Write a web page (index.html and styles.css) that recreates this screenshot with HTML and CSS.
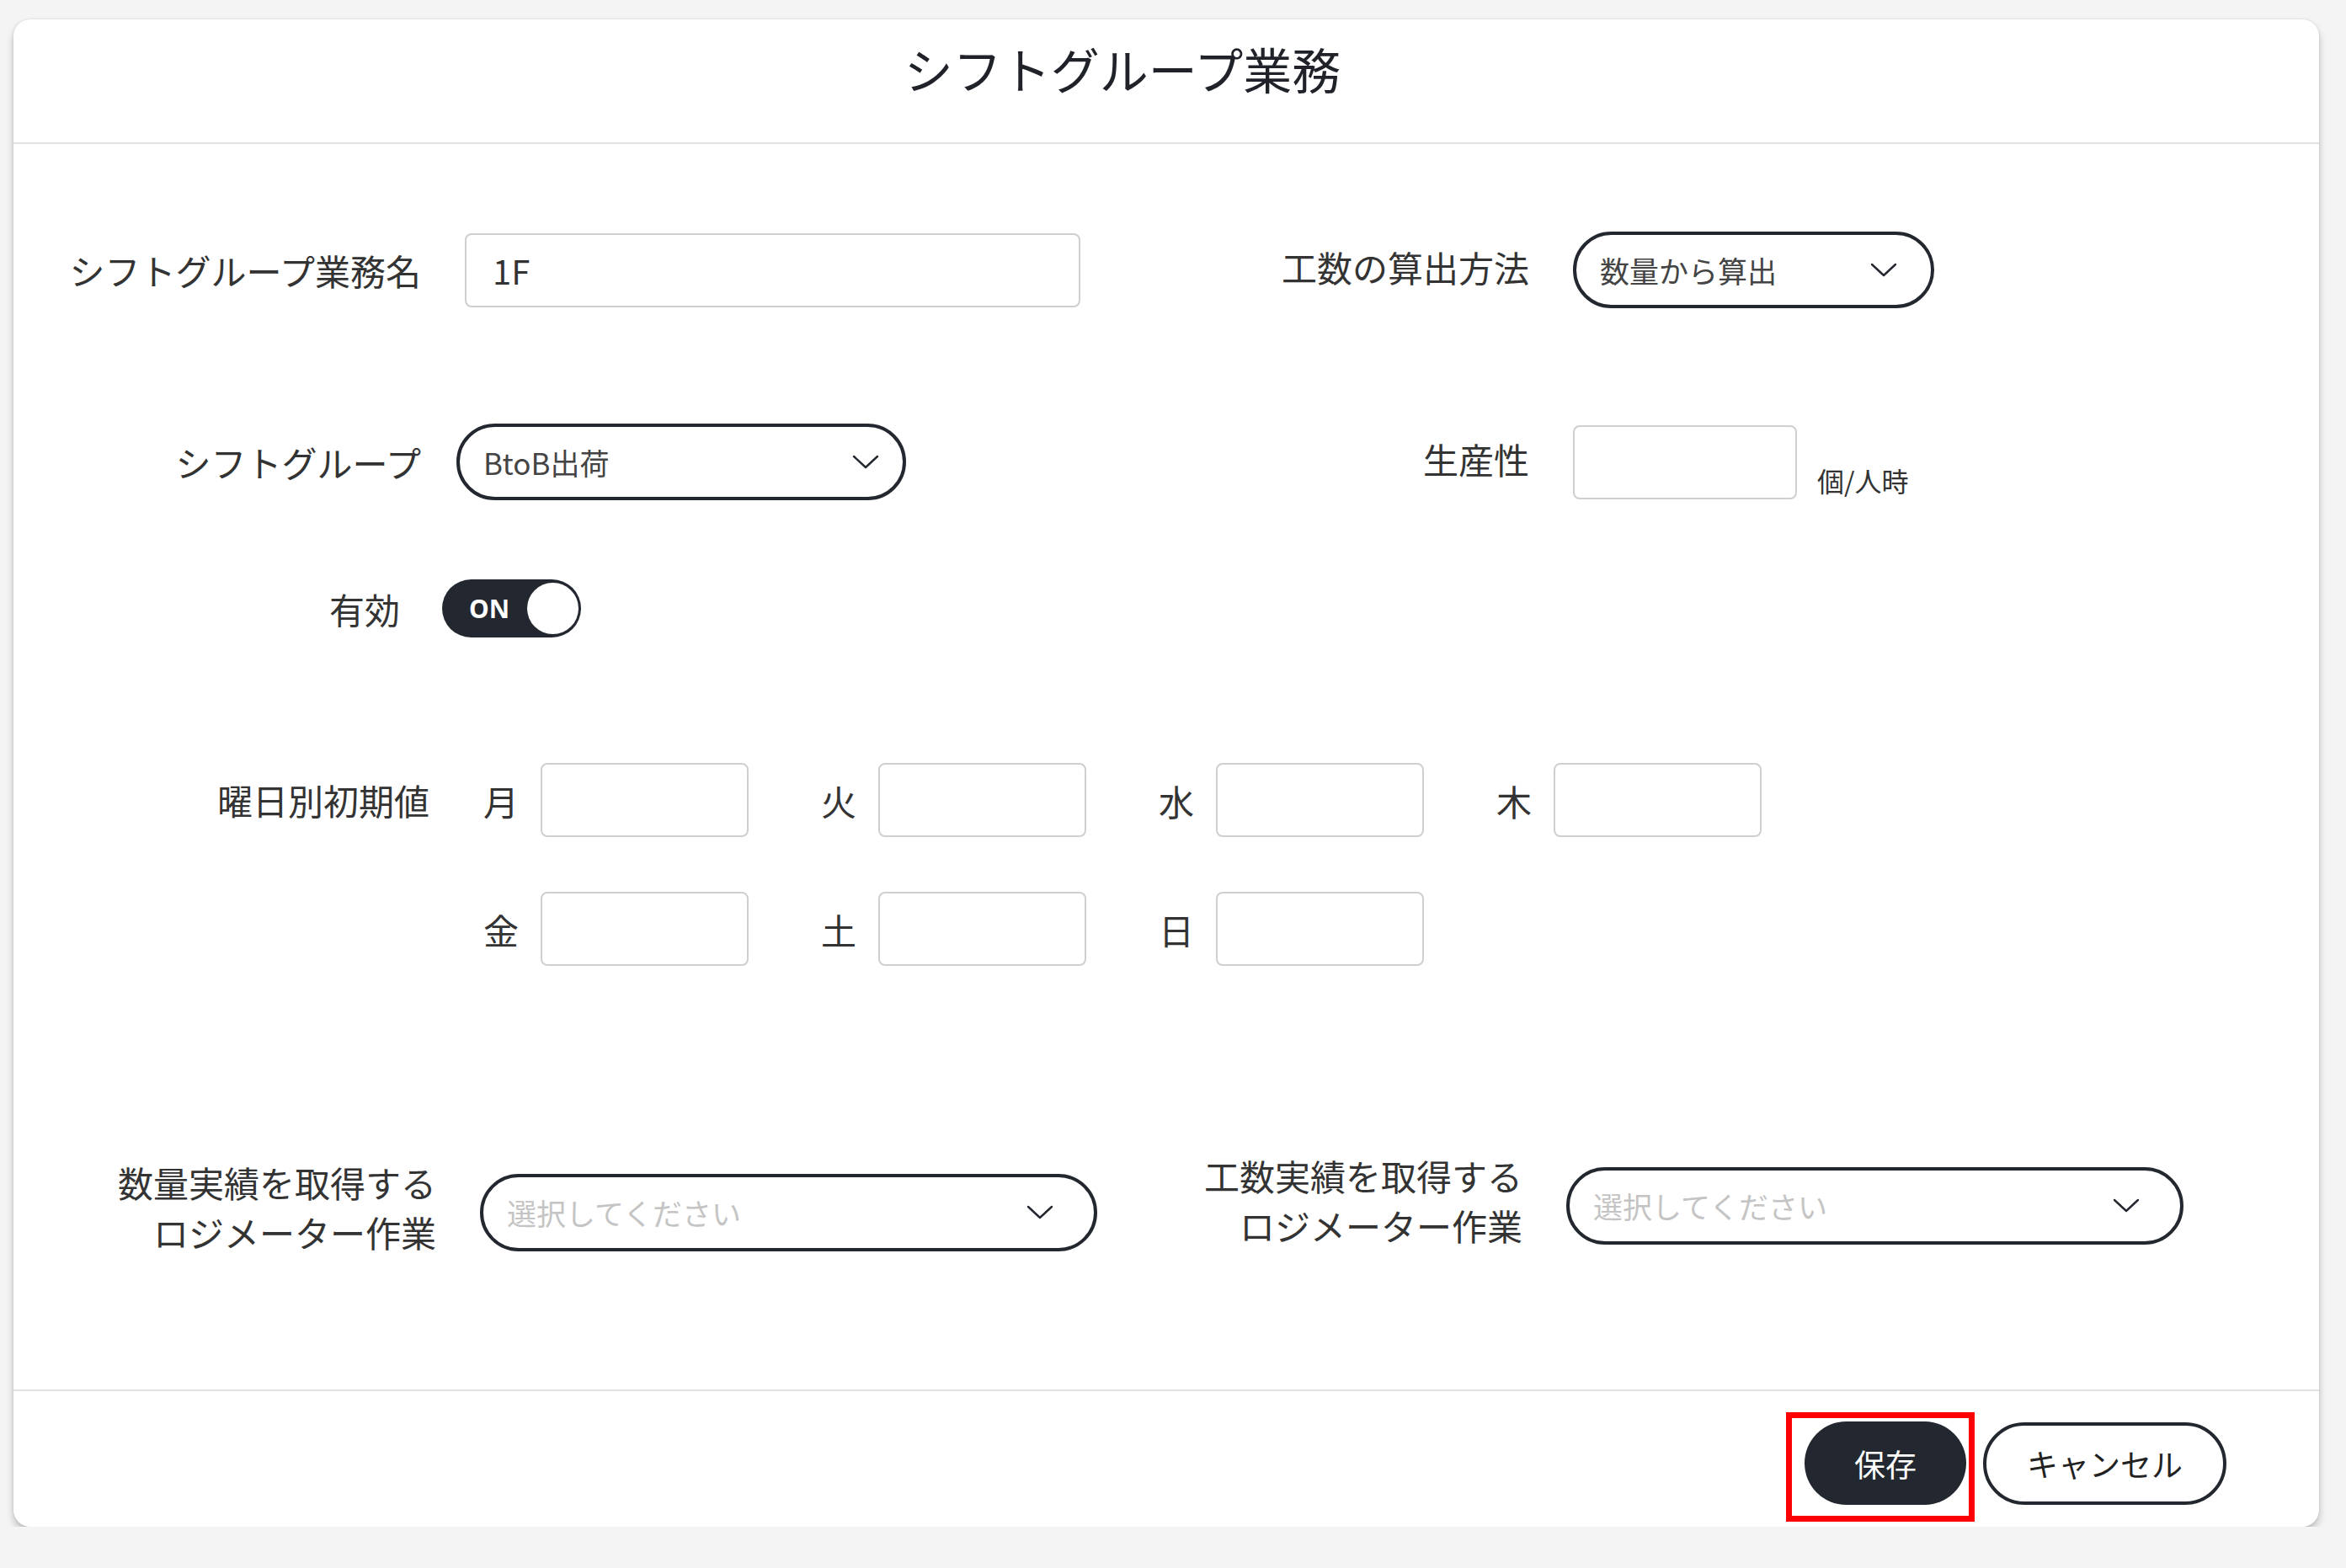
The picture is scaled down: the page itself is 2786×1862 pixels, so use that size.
FILE: index.html
```html
<!DOCTYPE html>
<html lang="ja">
<head>
    <meta charset="UTF-8">
    <meta name="viewport" content="width=device-width, initial-scale=1.0">
    <title>シフトグループ業務</title>
    <link rel="stylesheet" href="styles.css">
</head>
<body>

    <!-- ダイアログ -->
    <div class="dialog">
        <div class="dialog-header">
            <h1 class="dialog-title">シフトグループ業務</h1>
        </div>

        <div class="dialog-body">
            <!-- 業務名 / 算出方法 -->
            <div class="form-row">
                <div class="field field-left">
                    <label class="field-label">シフトグループ業務名</label>
                    <input class="text-input name-input" type="text" value="1F">
                </div>
                <div class="field">
                    <label class="field-label label-right">工数の算出方法</label>
                    <div class="select calc-select">
                        <span>数量から算出</span>
                        <svg class="chevron" viewBox="0 0 32 18"><polyline points="2,2 16,15 30,2"/></svg>
                    </div>
                </div>
            </div>

            <!-- シフトグループ / 生産性 -->
            <div class="form-row row-group">
                <div class="field field-left field-tight">
                    <label class="field-label">シフトグループ</label>
                    <div class="select group-select">
                        <span>BtoB出荷</span>
                        <svg class="chevron" viewBox="0 0 32 18"><polyline points="2,2 16,15 30,2"/></svg>
                    </div>
                </div>
                <div class="field">
                    <label class="field-label label-right">生産性</label>
                    <div class="with-unit">
                        <input class="text-input rate-input" type="text" value="">
                        <span class="unit">個/人時</span>
                    </div>
                </div>
            </div>

            <!-- 有効 -->
            <div class="form-row row-toggle">
                <div class="field field-toggle">
                    <label class="field-label label-short">有効</label>
                    <div class="toggle">
                        <span class="toggle-text">ON</span>
                        <span class="toggle-knob"></span>
                    </div>
                </div>
            </div>

            <!-- 曜日別初期値 -->
            <div class="form-row row-days">
                <div class="field field-days">
                    <label class="field-label label-days">曜日別初期値</label>
                    <div class="day-grid">
                        <div class="day"><span class="day-label">月</span><input class="text-input day-input" type="text"></div>
                        <div class="day"><span class="day-label">火</span><input class="text-input day-input" type="text"></div>
                        <div class="day"><span class="day-label">水</span><input class="text-input day-input" type="text"></div>
                        <div class="day"><span class="day-label">木</span><input class="text-input day-input" type="text"></div>
                        <div class="day"><span class="day-label">金</span><input class="text-input day-input" type="text"></div>
                        <div class="day"><span class="day-label">土</span><input class="text-input day-input" type="text"></div>
                        <div class="day"><span class="day-label">日</span><input class="text-input day-input" type="text"></div>
                    </div>
                </div>
            </div>

            <!-- ロジメーター作業 -->
            <div class="form-row row-logi">
                <div class="field field-left">
                    <label class="field-label label-two">数量実績を取得する<br>ロジメーター作業</label>
                    <div class="select logi-select">
                        <span class="placeholder">選択してください</span>
                        <svg class="chevron" viewBox="0 0 32 18"><polyline points="2,2 16,15 30,2"/></svg>
                    </div>
                </div>
                <div class="field field-raise">
                    <label class="field-label label-two-right">工数実績を取得する<br>ロジメーター作業</label>
                    <div class="select logi-select">
                        <span class="placeholder">選択してください</span>
                        <svg class="chevron" viewBox="0 0 32 18"><polyline points="2,2 16,15 30,2"/></svg>
                    </div>
                </div>
            </div>
        </div>

        <!-- フッター -->
        <div class="dialog-footer">
            <div class="highlight">
                <button class="btn btn-primary" type="button">保存</button>
            </div>
            <button class="btn btn-outline" type="button">キャンセル</button>
        </div>
    </div>

</body>
</html>
```

FILE: styles.css
```css
/* Reset */
* {
    margin: 0;
    padding: 0;
    box-sizing: border-box;
}

body {
    font-family: "Noto Sans CJK JP", "Noto Sans", sans-serif;
    color: #333;
    background-color: #f4f4f4;
}

/* Dialog */
.dialog {
    margin: 23px 0 0 16px;
    width: 2738px;
    height: 1790px;
    background-color: #fff;
    border-radius: 20px;
    box-shadow: 0 6px 10px rgba(0, 0, 0, 0.22), 0 0 3px rgba(0, 0, 0, 0.12);
    display: flex;
    flex-direction: column;
    overflow: hidden;
}

.dialog-header {
    height: 148px;
    border-bottom: 2px solid #e2e2e2;
    display: flex;
    align-items: center;
    justify-content: center;
    padding: 0 104px 28px 0;
}

.dialog-title {
    font-size: 58px;
    font-weight: 400;
    line-height: 1.4;
    color: #1f2229;
}

.dialog-body {
    flex: 1;
    padding: 104px 0 0 60px;
}

/* Rows */
.form-row {
    display: flex;
    align-items: center;
}

.row-group {
    margin-top: 137px;
}

.row-toggle {
    margin-top: 94px;
}

.row-days {
    margin-top: 149px;
}

.row-logi {
    margin-top: 227px;
    align-items: flex-start;
}

.field {
    display: flex;
    align-items: center;
    gap: 52px;
}

.field-left {
    width: 1316px;
    flex: none;
}

.field-tight {
    gap: 42px;
}

.field-toggle {
    gap: 50px;
}

.field-days {
    align-items: flex-start;
    gap: 64px;
}

.field-raise {
    margin-top: -8px;
}

.field-label {
    width: 424px;
    flex: none;
    text-align: right;
    font-size: 42px;
    line-height: 59px;
    color: #333;
}

.label-right {
    margin-bottom: 8px;
}

.label-short {
    width: 399px;
}

.label-days {
    width: 434px;
    margin-top: 14px;
}

.label-two {
    width: 442px;
}

.label-two-right {
    width: 416px;
}

/* Inputs */
.text-input {
    height: 88px;
    border: 2px solid #cfcfcf;
    border-radius: 8px;
    padding: 0 31px;
    font-family: inherit;
    font-size: 40px;
    color: #333;
    background-color: #fff;
    outline: none;
}

.name-input {
    width: 731px;
}

.rate-input {
    width: 266px;
}

.day-input {
    width: 247px;
}

.with-unit {
    display: flex;
    align-items: flex-end;
    gap: 24px;
}

.unit {
    font-size: 32px;
    line-height: 45px;
    color: #333;
}

/* Select */
.select {
    height: 91px;
    border: 4px solid #232830;
    border-radius: 46px;
    display: flex;
    align-items: center;
    justify-content: space-between;
    padding: 0 40px 0 28px;
    font-size: 35px;
    color: #444;
    background-color: #fff;
}

.calc-select {
    width: 429px;
}

.group-select {
    width: 534px;
    padding-right: 28px;
}

.logi-select {
    width: 733px;
    height: 92px;
    margin-top: 13px;
    padding-right: 48px;
}

.placeholder {
    color: #c4c4c4;
}

.chevron {
    width: 32px;
    height: 18px;
    fill: none;
    stroke: #232830;
    stroke-width: 2.4;
    stroke-linecap: round;
    stroke-linejoin: round;
}

/* Toggle */
.toggle {
    width: 165px;
    height: 69px;
    border-radius: 35px;
    background-color: #232830;
    display: flex;
    align-items: center;
    justify-content: space-between;
    padding: 0 3px 0 32px;
}

.toggle-text {
    font-family: "Noto Sans", sans-serif;
    font-size: 30px;
    font-weight: 700;
    color: #fff;
}

.toggle-knob {
    width: 61px;
    height: 61px;
    border-radius: 50%;
    background-color: #fff;
}

/* Days */
.day-grid {
    display: grid;
    grid-template-columns: repeat(4, 401px);
    row-gap: 65px;
}

.day {
    display: flex;
    align-items: center;
    gap: 26px;
}

.day-label {
    width: 42px;
    font-size: 42px;
    line-height: 59px;
    text-align: center;
    color: #333;
}

/* Footer */
.dialog-footer {
    height: 163px;
    border-top: 2px solid #e2e2e2;
    display: flex;
    justify-content: flex-end;
    align-items: flex-start;
    padding: 25px 110px 0 0;
}

.highlight {
    border: 7px solid #ff0000;
    padding: 4px 3px 13px 15px;
}

.btn {
    height: 98px;
    border-radius: 50px;
    font-family: inherit;
    font-size: 37px;
    display: flex;
    align-items: center;
    justify-content: center;
    cursor: pointer;
}

.btn-primary {
    width: 192px;
    height: 99px;
    border: none;
    background-color: #232830;
    color: #fff;
}

.btn-outline {
    width: 289px;
    margin: 12px 0 0 10px;
    border: 4px solid #232830;
    background-color: #fff;
    color: #222;
}
```
